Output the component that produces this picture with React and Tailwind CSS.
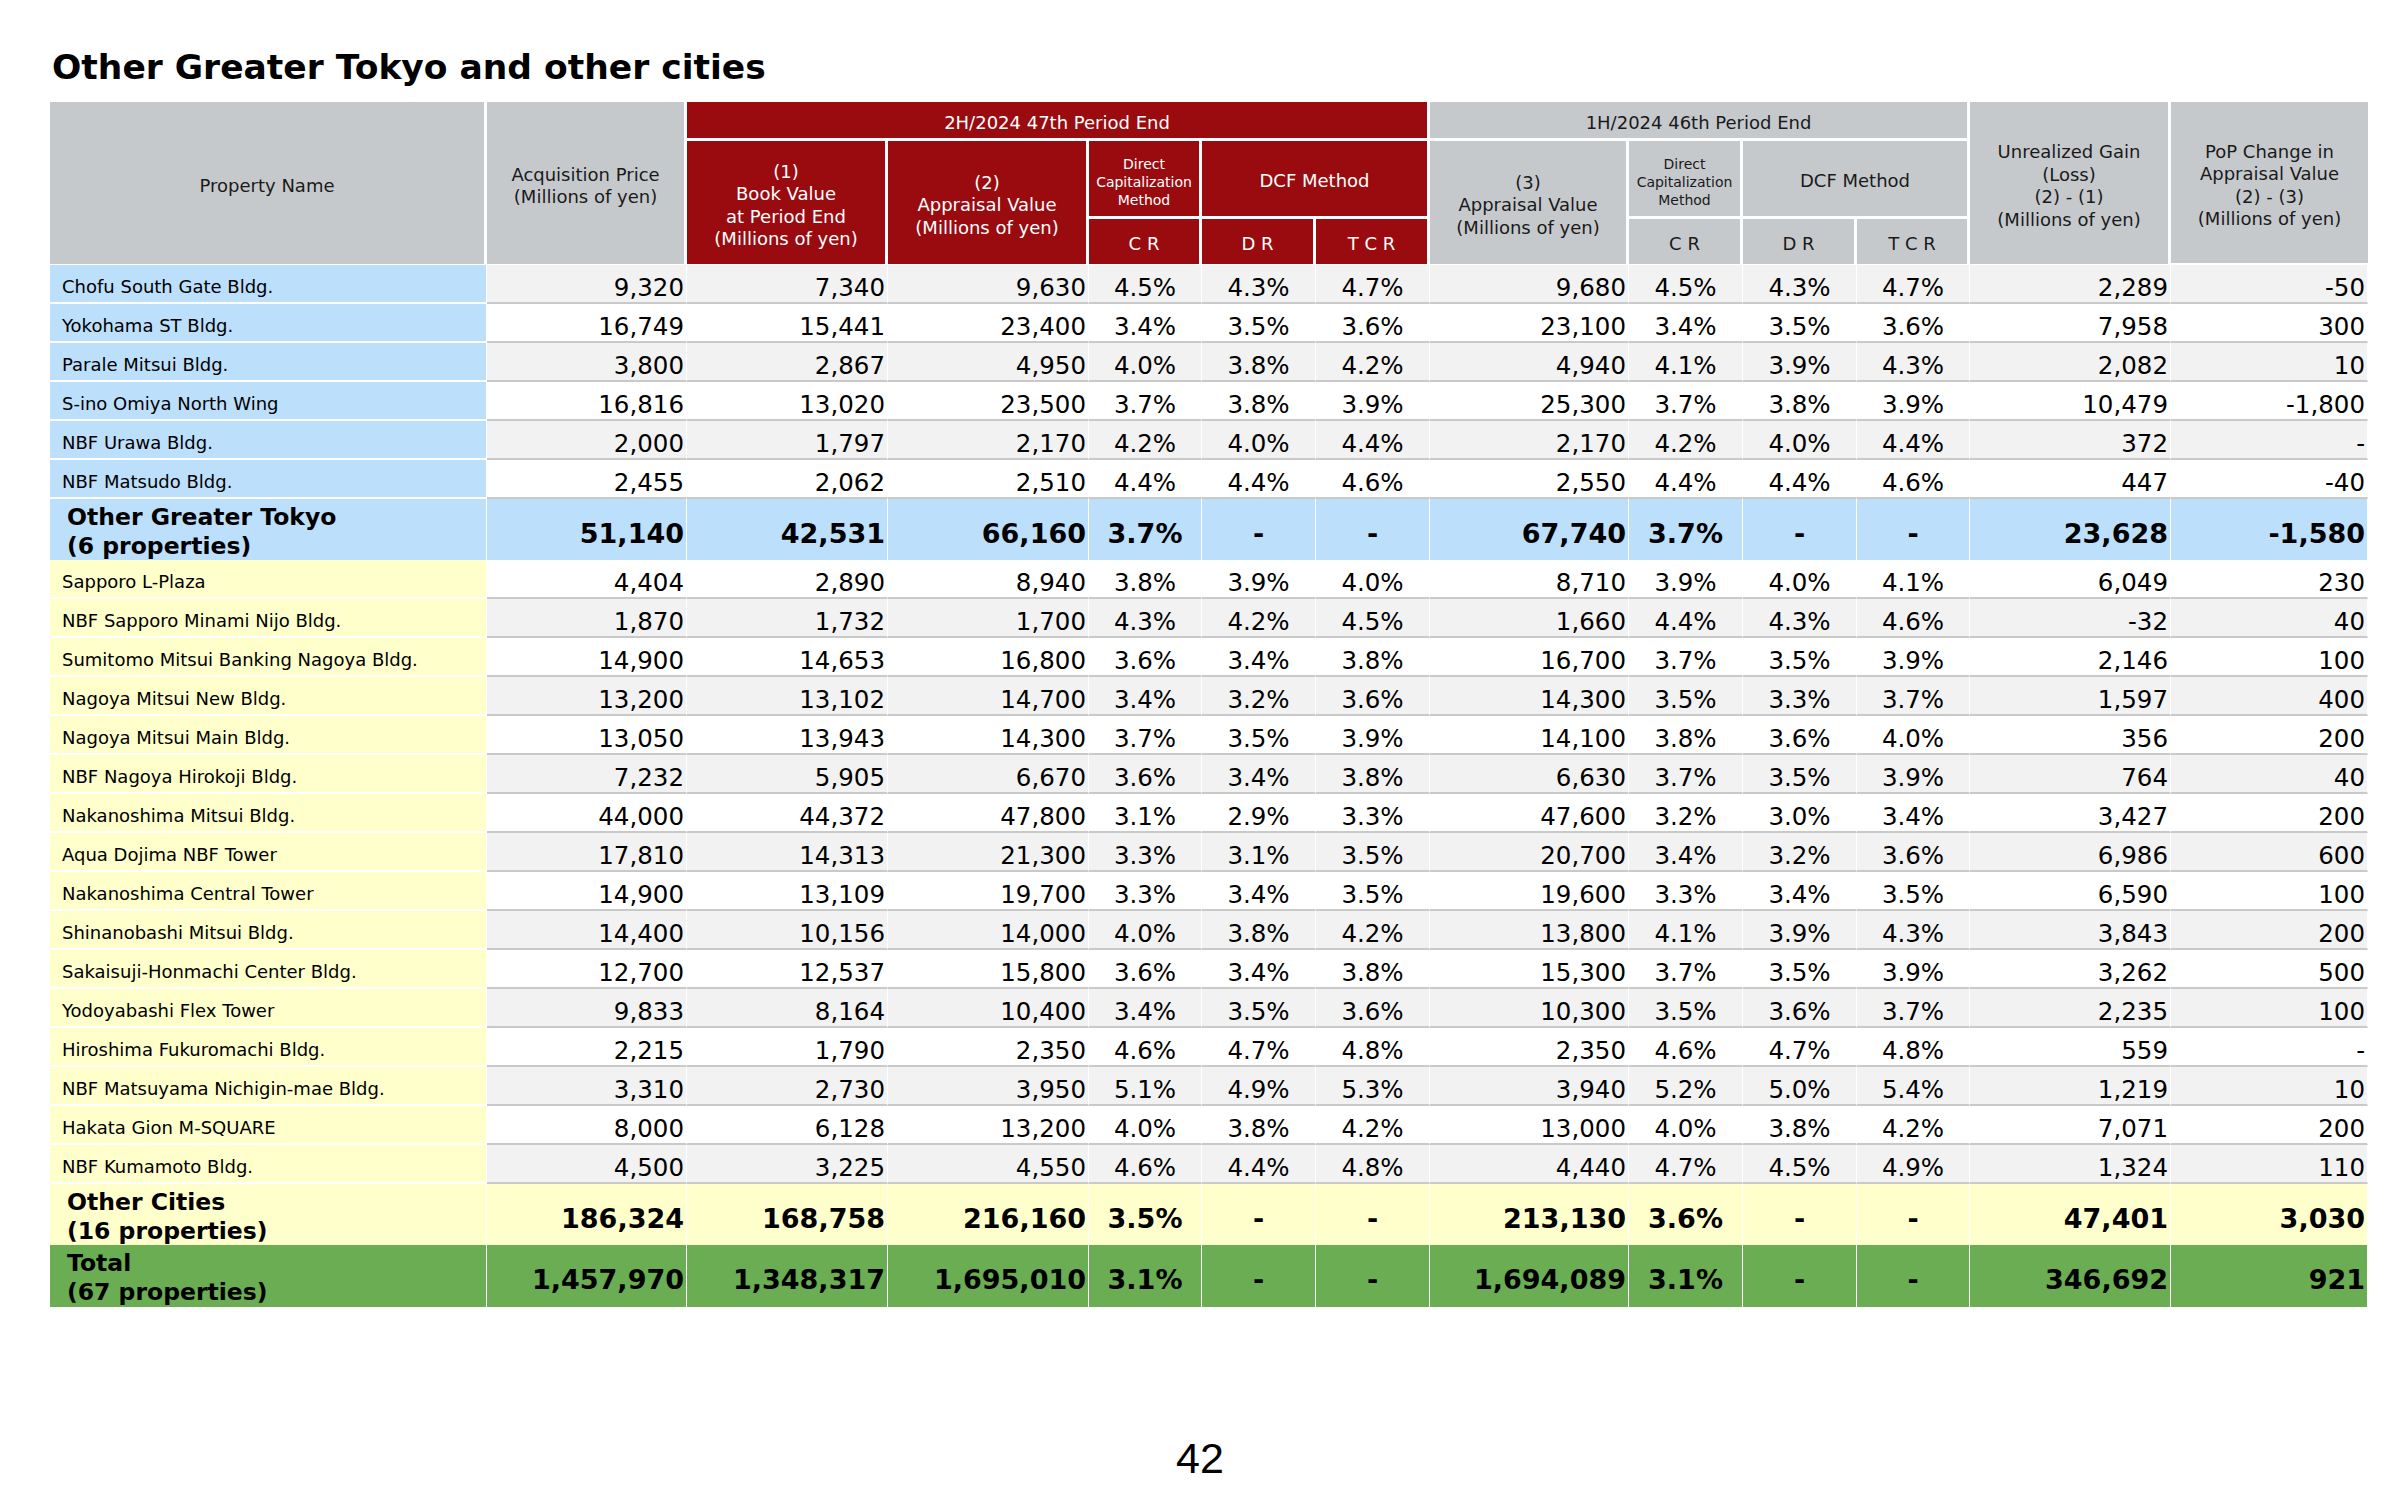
const COLS =
  'grid grid-cols-[437px_200px_201px_201px_113px_114px_114px_199px_114px_114px_113px_201px_197px]';

// r = right aligned amount, c = centered rate
const ALIGN = ['r', 'r', 'r', 'c', 'c', 'c', 'r', 'c', 'c', 'c', 'r', 'r'];

const tokyo = [
  ['Chofu South Gate Bldg.', '9,320', '7,340', '9,630', '4.5%', '4.3%', '4.7%', '9,680', '4.5%', '4.3%', '4.7%', '2,289', '-50'],
  ['Yokohama ST Bldg.', '16,749', '15,441', '23,400', '3.4%', '3.5%', '3.6%', '23,100', '3.4%', '3.5%', '3.6%', '7,958', '300'],
  ['Parale Mitsui Bldg.', '3,800', '2,867', '4,950', '4.0%', '3.8%', '4.2%', '4,940', '4.1%', '3.9%', '4.3%', '2,082', '10'],
  ['S-ino Omiya North Wing', '16,816', '13,020', '23,500', '3.7%', '3.8%', '3.9%', '25,300', '3.7%', '3.8%', '3.9%', '10,479', '-1,800'],
  ['NBF Urawa Bldg.', '2,000', '1,797', '2,170', '4.2%', '4.0%', '4.4%', '2,170', '4.2%', '4.0%', '4.4%', '372', '-'],
  ['NBF Matsudo Bldg.', '2,455', '2,062', '2,510', '4.4%', '4.4%', '4.6%', '2,550', '4.4%', '4.4%', '4.6%', '447', '-40'],
];

const cities = [
  ['Sapporo L-Plaza', '4,404', '2,890', '8,940', '3.8%', '3.9%', '4.0%', '8,710', '3.9%', '4.0%', '4.1%', '6,049', '230'],
  ['NBF Sapporo Minami Nijo Bldg.', '1,870', '1,732', '1,700', '4.3%', '4.2%', '4.5%', '1,660', '4.4%', '4.3%', '4.6%', '-32', '40'],
  ['Sumitomo Mitsui Banking Nagoya Bldg.', '14,900', '14,653', '16,800', '3.6%', '3.4%', '3.8%', '16,700', '3.7%', '3.5%', '3.9%', '2,146', '100'],
  ['Nagoya Mitsui New Bldg.', '13,200', '13,102', '14,700', '3.4%', '3.2%', '3.6%', '14,300', '3.5%', '3.3%', '3.7%', '1,597', '400'],
  ['Nagoya Mitsui Main Bldg.', '13,050', '13,943', '14,300', '3.7%', '3.5%', '3.9%', '14,100', '3.8%', '3.6%', '4.0%', '356', '200'],
  ['NBF Nagoya Hirokoji Bldg.', '7,232', '5,905', '6,670', '3.6%', '3.4%', '3.8%', '6,630', '3.7%', '3.5%', '3.9%', '764', '40'],
  ['Nakanoshima Mitsui Bldg.', '44,000', '44,372', '47,800', '3.1%', '2.9%', '3.3%', '47,600', '3.2%', '3.0%', '3.4%', '3,427', '200'],
  ['Aqua Dojima NBF Tower', '17,810', '14,313', '21,300', '3.3%', '3.1%', '3.5%', '20,700', '3.4%', '3.2%', '3.6%', '6,986', '600'],
  ['Nakanoshima Central Tower', '14,900', '13,109', '19,700', '3.3%', '3.4%', '3.5%', '19,600', '3.3%', '3.4%', '3.5%', '6,590', '100'],
  ['Shinanobashi Mitsui Bldg.', '14,400', '10,156', '14,000', '4.0%', '3.8%', '4.2%', '13,800', '4.1%', '3.9%', '4.3%', '3,843', '200'],
  ['Sakaisuji-Honmachi Center Bldg.', '12,700', '12,537', '15,800', '3.6%', '3.4%', '3.8%', '15,300', '3.7%', '3.5%', '3.9%', '3,262', '500'],
  ['Yodoyabashi Flex Tower', '9,833', '8,164', '10,400', '3.4%', '3.5%', '3.6%', '10,300', '3.5%', '3.6%', '3.7%', '2,235', '100'],
  ['Hiroshima Fukuromachi Bldg.', '2,215', '1,790', '2,350', '4.6%', '4.7%', '4.8%', '2,350', '4.6%', '4.7%', '4.8%', '559', '-'],
  ['NBF Matsuyama Nichigin-mae Bldg.', '3,310', '2,730', '3,950', '5.1%', '4.9%', '5.3%', '3,940', '5.2%', '5.0%', '5.4%', '1,219', '10'],
  ['Hakata Gion M-SQUARE', '8,000', '6,128', '13,200', '4.0%', '3.8%', '4.2%', '13,000', '4.0%', '3.8%', '4.2%', '7,071', '200'],
  ['NBF Kumamoto Bldg.', '4,500', '3,225', '4,550', '4.6%', '4.4%', '4.8%', '4,440', '4.7%', '4.5%', '4.9%', '1,324', '110'],
];

const GRAY = 'bg-[#c6c9cc] text-[#1a1a1a]';
const RED = 'bg-[#9a0b10] text-white';
const CELL = 'flex items-center justify-center text-center border-white pt-[6px]';
const TOP = 'flex items-center justify-center text-center border-white pt-[7px]';

function Header() {
  return (
    <div className={`${COLS} grid-rows-[39px_78px_46px] text-[18px] leading-[22.5px]`}>
      <div className={`${GRAY} ${CELL} col-start-1 row-start-1 row-span-3 border-r-[3px] border-b-[1px]`}>
        Property Name
      </div>
      <div className={`${GRAY} ${CELL} col-start-2 row-start-1 row-span-3 border-r-[3px] border-b-[1px]`}>
        Acquisition Price<br />(Millions of yen)
      </div>

      <div className={`${RED} ${TOP} col-start-3 col-span-5 row-start-1 border-r-[3px] border-b-[3px]`}>
        2H/2024 47th Period End
      </div>
      <div className={`${RED} ${CELL} col-start-3 row-start-2 row-span-2 border-r-[3px] border-b-[1px]`}>
        (1)<br />Book Value<br />at Period End<br />(Millions of yen)
      </div>
      <div className={`${RED} ${CELL} col-start-4 row-start-2 row-span-2 border-r-[3px] border-b-[1px]`}>
        (2)<br />Appraisal Value<br />(Millions of yen)
      </div>
      <div className={`${RED} ${CELL} col-start-5 row-start-2 border-r-[3px] border-b-[3px] text-[14px] leading-[18px]`}>
        Direct<br />Capitalization<br />Method
      </div>
      <div className={`${RED} ${CELL} col-start-6 col-span-2 row-start-2 border-r-[3px] border-b-[3px]`}>
        DCF Method
      </div>
      <div className={`${RED} ${CELL} col-start-5 row-start-3 border-r-[3px] border-b-[1px]`}>C R</div>
      <div className={`${RED} ${CELL} col-start-6 row-start-3 border-r-[3px] border-b-[1px]`}>D R</div>
      <div className={`${RED} ${CELL} col-start-7 row-start-3 border-r-[3px] border-b-[1px]`}>T C R</div>

      <div className={`${GRAY} ${TOP} col-start-8 col-span-4 row-start-1 border-r-[3px] border-b-[3px]`}>
        1H/2024 46th Period End
      </div>
      <div className={`${GRAY} ${CELL} col-start-8 row-start-2 row-span-2 border-r-[3px] border-b-[1px]`}>
        (3)<br />Appraisal Value<br />(Millions of yen)
      </div>
      <div className={`${GRAY} ${CELL} col-start-9 row-start-2 border-r-[3px] border-b-[3px] text-[14px] leading-[18px]`}>
        Direct<br />Capitalization<br />Method
      </div>
      <div className={`${GRAY} ${CELL} col-start-10 col-span-2 row-start-2 border-r-[3px] border-b-[3px]`}>
        DCF Method
      </div>
      <div className={`${GRAY} ${CELL} col-start-9 row-start-3 border-r-[3px] border-b-[1px]`}>C R</div>
      <div className={`${GRAY} ${CELL} col-start-10 row-start-3 border-r-[3px] border-b-[1px]`}>D R</div>
      <div className={`${GRAY} ${CELL} col-start-11 row-start-3 border-r-[3px] border-b-[1px]`}>T C R</div>

      <div className={`${GRAY} ${CELL} col-start-12 row-start-1 row-span-3 border-r-[3px] border-b-[1px]`}>
        Unrealized Gain<br />(Loss)<br />(2) - (1)<br />(Millions of yen)
      </div>
      <div className={`${GRAY} ${CELL} col-start-13 row-start-1 row-span-3 border-b-[2px]`}>
        PoP Change in<br />Appraisal Value<br />(2) - (3)<br />(Millions of yen)
      </div>
    </div>
  );
}

function DataRow({ row, shaded, nameBg }) {
  const [name, ...vals] = row;
  return (
    <div className={`${COLS} h-[39px]`}>
      <div className={`${nameBg} flex items-end pl-[12px] pb-[6px] text-[18px] leading-[18px] border-b-2 border-r border-white`}>
        {name}
      </div>
      {vals.map((v, i) => (
        <div
          key={i}
          className={`${shaded ? 'bg-[#f2f2f2]' : 'bg-white'} flex items-end text-[24.5px] leading-[28px] border-b-2 border-b-[#c9c9c9] border-r border-r-white ${
            ALIGN[i] === 'r' ? 'justify-end pr-[2px]' : 'justify-center'
          }`}
        >
          {v}
        </div>
      ))}
    </div>
  );
}

function SumRow({ label, sub, vals, bg, last }) {
  const edge = last ? '' : 'border-b-2 border-b-[#c9c9c9]';
  return (
    <div className={`${COLS} ${last ? 'h-[60px]' : 'h-[61px]'}`}>
      <div className={`${bg} ${edge} flex flex-col justify-start pt-[4px] pl-[17px] text-[23.5px] leading-[29px] font-bold border-r border-r-white whitespace-nowrap`}>
        <span>{label}</span>
        <span>{sub}</span>
      </div>
      {vals.map((v, i) => (
        <div
          key={i}
          className={`${bg} ${edge} flex items-center pt-[8px] text-[27px] leading-[32px] font-bold border-r border-r-white ${
            ALIGN[i] === 'r' ? 'justify-end pr-[2px]' : 'justify-center'
          }`}
        >
          {v}
        </div>
      ))}
    </div>
  );
}

export default function App() {
  return (
    <div className="w-[2400px] h-[1497px] bg-white text-black font-['DejaVu_Sans',sans-serif] overflow-hidden">
      <div className="pl-[50px] pt-[50px]">
        <h1 className="ml-[2px] text-[34.5px] leading-[34px] font-bold">Other Greater Tokyo and other cities</h1>

        <div className="mt-[18px] w-[2318px]">
          <Header />
          {tokyo.map((r, i) => (
            <DataRow key={r[0]} row={r} shaded={i % 2 === 0} nameBg="bg-[#bcdffb]" />
          ))}
          <SumRow
            label="Other Greater Tokyo"
            sub="(6 properties)"
            bg="bg-[#bcdffb]"
            vals={['51,140', '42,531', '66,160', '3.7%', '-', '-', '67,740', '3.7%', '-', '-', '23,628', '-1,580']}
          />
          {cities.map((r, i) => (
            <DataRow key={r[0]} row={r} shaded={i % 2 === 1} nameBg="bg-[#ffffcc]" />
          ))}
          <SumRow
            label="Other Cities"
            sub="(16 properties)"
            bg="bg-[#ffffcc]"
            vals={['186,324', '168,758', '216,160', '3.5%', '-', '-', '213,130', '3.6%', '-', '-', '47,401', '3,030']}
          />
          <SumRow
            label="Total"
            sub="(67 properties)"
            bg="bg-[#6aad52]"
            last
            vals={['1,457,970', '1,348,317', '1,695,010', '3.1%', '-', '-', '1,694,089', '3.1%', '-', '-', '346,692', '921']}
          />
        </div>
      </div>

      <div className="mt-[132px] text-center font-['Liberation_Sans',Arial,sans-serif] text-[43px] leading-[43px]">42</div>
    </div>
  );
}
